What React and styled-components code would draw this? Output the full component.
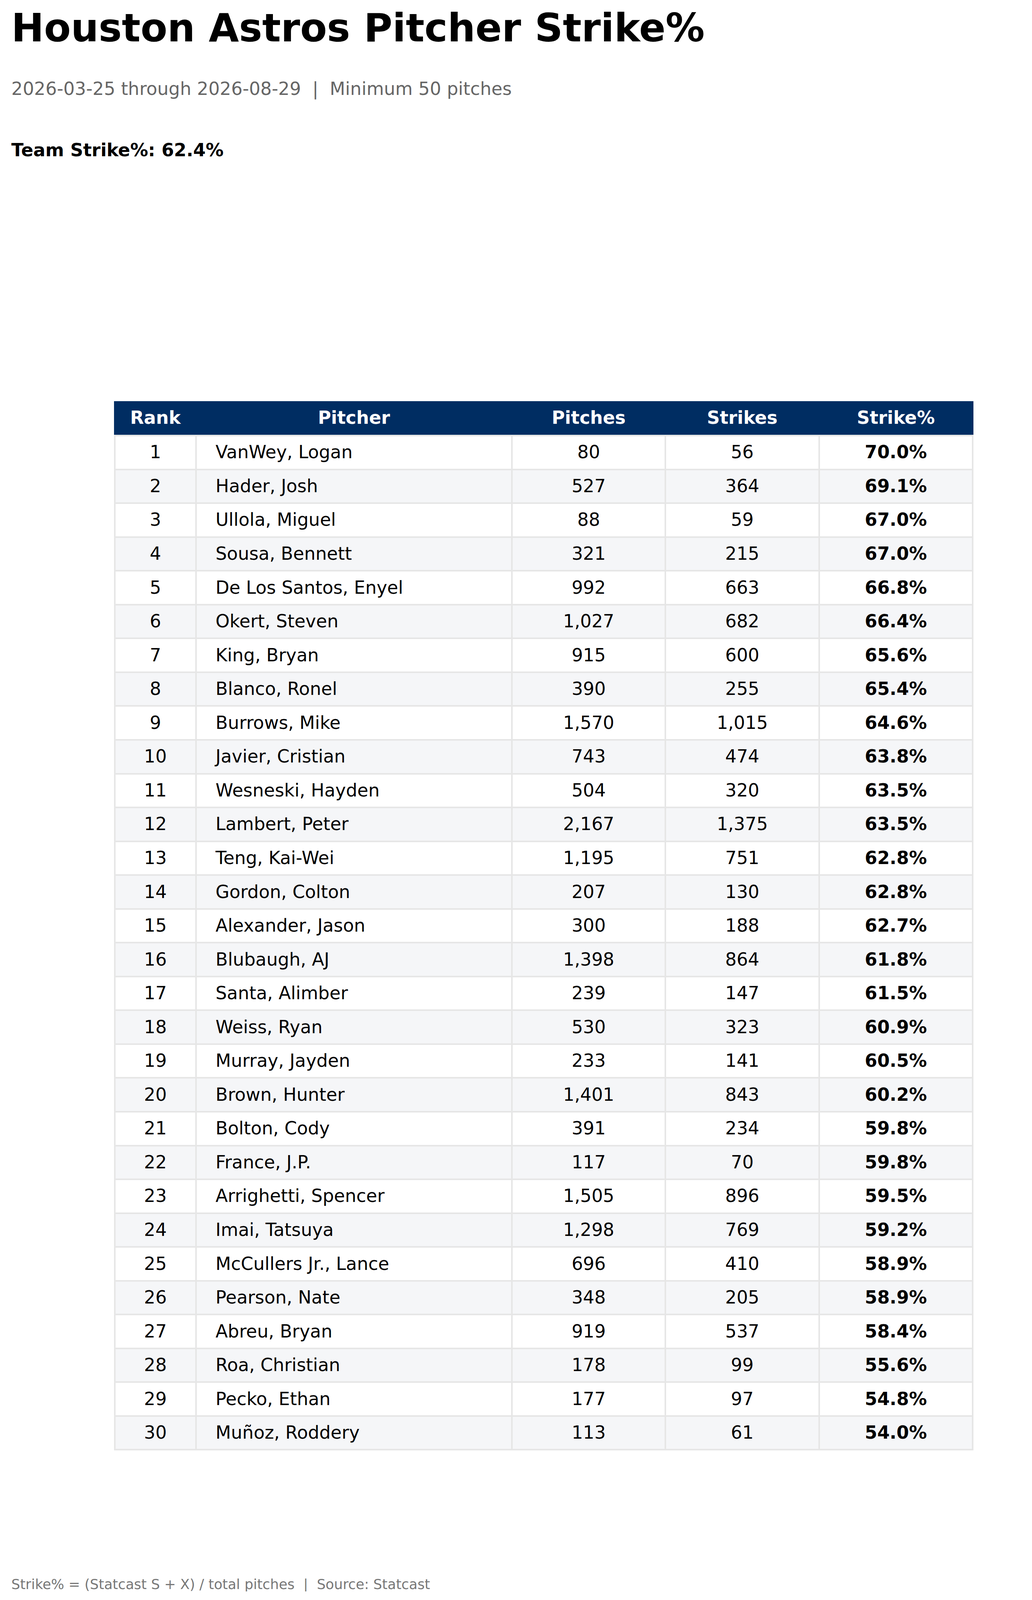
import React from 'react';
import styled, { createGlobalStyle } from 'styled-components';

const GlobalStyle = createGlobalStyle`
  html, body {
    margin: 0;
    padding: 0;
    background: #ffffff;
  }
  body {
    font-family: "DejaVu Sans", "Liberation Sans", sans-serif;
    color: #000;
  }
`;

const Page = styled.div`
  width: 2643px;
  box-sizing: border-box;
  padding: 22.4px 0 0 29px;
  display: flex;
  flex-direction: column;
  align-items: flex-start;
`;

const Title = styled.h1`
  margin: 0;
  font-size: 100px;
  line-height: 1;
  font-weight: bold;
  color: #000;
  white-space: nowrap;
`;

const Subtitle = styled.div`
  margin-top: 82.8px;
  font-size: 45.83px;
  line-height: 1;
  color: #666666;
  white-space: pre;
`;

const TeamLine = styled.div`
  margin-top: 111.2px;
  font-size: 45.83px;
  line-height: 1;
  font-weight: bold;
  white-space: pre;
`;

const Table = styled.div`
  margin-top: 619px;
  margin-left: 263px;
  width: 2201px;
`;

const COLS = '204px 805px 1fr 1fr 1fr';

const HeaderRow = styled.div`
  display: grid;
  grid-template-columns: ${COLS};
  column-gap: 4px;
  padding: 0 4px;
  height: 86px;
  background: #002d62;
`;

const HeadCell = styled.div`
  display: flex;
  align-items: center;
  justify-content: center;
  color: #ffffff;
  font-size: 45.83px;
  font-weight: bold;
  line-height: 1;
`;

const Body = styled.div`
  display: flex;
  flex-direction: column;
  gap: 4px;
  padding: 4px;
  background: #e6e6e6;
`;

const Row = styled.div`
  display: grid;
  grid-template-columns: ${COLS};
  column-gap: 4px;
  height: 82.55px;
`;

const Cell = styled.div`
  display: flex;
  align-items: center;
  justify-content: ${p => (p.$left ? 'flex-start' : 'center')};
  padding-left: ${p => (p.$left ? '48px' : '0')};
  background: ${p => (p.$shade ? '#f5f6f8' : '#ffffff')};
  font-size: 45.83px;
  font-weight: ${p => (p.$bold ? 'bold' : 'normal')};
  line-height: 1;
  color: #000;
  white-space: nowrap;
`;

const Footer = styled.div`
  margin-top: 325px;
  font-size: 35.4px;
  line-height: 1;
  color: #777777;
  white-space: pre;
`;

const pitchers = [
  ['VanWey, Logan', '80', '56', '70.0%'],
  ['Hader, Josh', '527', '364', '69.1%'],
  ['Ullola, Miguel', '88', '59', '67.0%'],
  ['Sousa, Bennett', '321', '215', '67.0%'],
  ['De Los Santos, Enyel', '992', '663', '66.8%'],
  ['Okert, Steven', '1,027', '682', '66.4%'],
  ['King, Bryan', '915', '600', '65.6%'],
  ['Blanco, Ronel', '390', '255', '65.4%'],
  ['Burrows, Mike', '1,570', '1,015', '64.6%'],
  ['Javier, Cristian', '743', '474', '63.8%'],
  ['Wesneski, Hayden', '504', '320', '63.5%'],
  ['Lambert, Peter', '2,167', '1,375', '63.5%'],
  ['Teng, Kai-Wei', '1,195', '751', '62.8%'],
  ['Gordon, Colton', '207', '130', '62.8%'],
  ['Alexander, Jason', '300', '188', '62.7%'],
  ['Blubaugh, AJ', '1,398', '864', '61.8%'],
  ['Santa, Alimber', '239', '147', '61.5%'],
  ['Weiss, Ryan', '530', '323', '60.9%'],
  ['Murray, Jayden', '233', '141', '60.5%'],
  ['Brown, Hunter', '1,401', '843', '60.2%'],
  ['Bolton, Cody', '391', '234', '59.8%'],
  ['France, J.P.', '117', '70', '59.8%'],
  ['Arrighetti, Spencer', '1,505', '896', '59.5%'],
  ['Imai, Tatsuya', '1,298', '769', '59.2%'],
  ['McCullers Jr., Lance', '696', '410', '58.9%'],
  ['Pearson, Nate', '348', '205', '58.9%'],
  ['Abreu, Bryan', '919', '537', '58.4%'],
  ['Roa, Christian', '178', '99', '55.6%'],
  ['Pecko, Ethan', '177', '97', '54.8%'],
  ['Muñoz, Roddery', '113', '61', '54.0%'],
];

const headers = ['Rank', 'Pitcher', 'Pitches', 'Strikes', 'Strike%'];

export default function App() {
  return (
    <>
      <GlobalStyle />
      <Page>
        <Title>Houston Astros Pitcher Strike%</Title>
        <Subtitle>2026-03-25 through 2026-08-29  |  Minimum 50 pitches</Subtitle>
        <TeamLine>Team Strike%: 62.4%</TeamLine>

        <Table>
          <HeaderRow>
            {headers.map(h => (
              <HeadCell key={h}>{h}</HeadCell>
            ))}
          </HeaderRow>
          <Body>
            {pitchers.map(([name, pitches, strikes, pct], i) => {
              const shade = i % 2 === 1;
              return (
                <Row key={name}>
                  <Cell $shade={shade}>{i + 1}</Cell>
                  <Cell $shade={shade} $left>{name}</Cell>
                  <Cell $shade={shade}>{pitches}</Cell>
                  <Cell $shade={shade}>{strikes}</Cell>
                  <Cell $shade={shade} $bold>{pct}</Cell>
                </Row>
              );
            })}
          </Body>
        </Table>

        <Footer>Strike% = (Statcast S + X) / total pitches  |  Source: Statcast</Footer>
      </Page>
    </>
  );
}
